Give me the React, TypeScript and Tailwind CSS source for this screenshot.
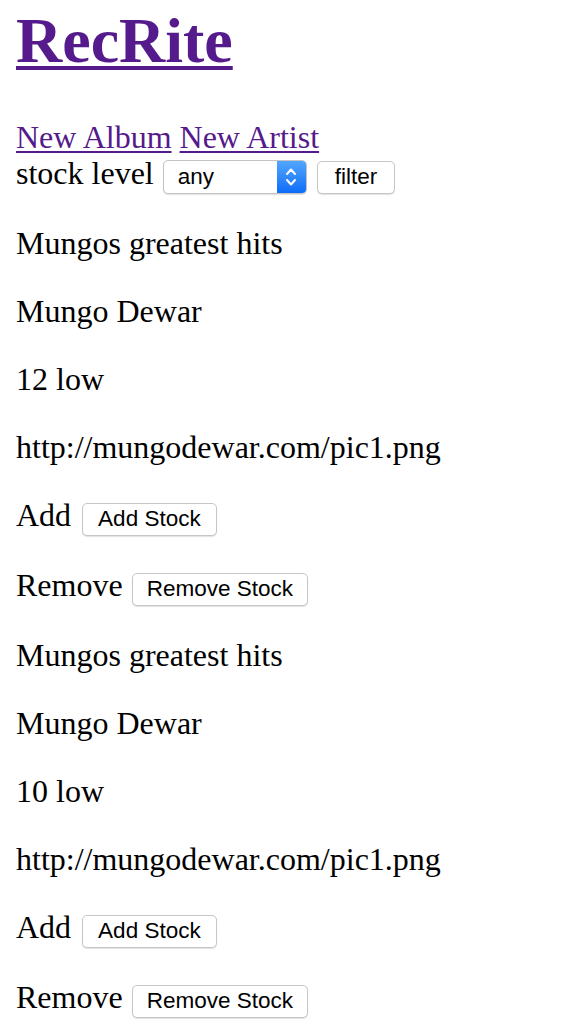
import React from "react";

function Btn({ children, px = "px-[15px]" }: { children: React.ReactNode; px?: string }) {
  return (
    <button
      type="button"
      className={`h-[33px] ${px} flex items-center bg-white border border-[#c6c6c6] rounded-[5px] shadow-[0_1px_1px_rgba(0,0,0,0.12)] font-['Liberation_Sans',Arial,sans-serif] text-[22.5px] leading-[26px] text-black`}
    >
      {children}
    </button>
  );
}

function Album({ count }: { count: number }) {
  return (
    <div>
      <p className="mt-8 h-[36px]">Mungos greatest hits</p>
      <p className="mt-8 h-[36px]">Mungo Dewar</p>
      <p className="mt-8 h-[36px]">{count} low</p>
      <p className="mt-8 h-[36px]">http://mungodewar.com/pic1.png</p>
      <div className="mt-8 h-[38px] flex items-baseline gap-[11px]">
        <span>Add</span>
        <Btn>Add Stock</Btn>
      </div>
      <div className="mt-8 h-[38px] flex items-baseline gap-[9px]">
        <span>Remove</span>
        <Btn px="px-[14px]">Remove Stock</Btn>
      </div>
    </div>
  );
}

export default function App() {
  return (
    <div className="min-h-screen bg-white pl-4 font-['Liberation_Serif','Times_New_Roman',serif] text-[32px] leading-[36px] text-black">
      <h1 className="pt-[5px] text-[64px] leading-[72px] font-bold">
        <a href="#" className="text-[#551a8b] underline decoration-4 underline-offset-4">
          RecRite
        </a>
      </h1>
      <div className="mt-[42px] h-[36px]">
        <a href="#" className="text-[#551a8b] underline decoration-2 underline-offset-[3px]">
          New Album
        </a>{" "}
        <a href="#" className="text-[#551a8b] underline decoration-2 underline-offset-[3px]">
          New Artist
        </a>
      </div>
      <div className="h-[38px] flex items-baseline">
        <span>stock level</span>
        <div className="ml-[9px] w-[144px] h-[34px] flex items-center bg-white border border-[#c3c3c3] rounded-[5px] shadow-[0_1px_1px_rgba(0,0,0,0.12)] overflow-hidden">
          <span className="flex-1 pl-[14px] font-['Liberation_Sans',Arial,sans-serif] text-[22.5px] leading-[26px]">
            any
          </span>
          <span className="w-[29px] h-full flex items-center justify-center bg-gradient-to-b from-[#52a6fd] to-[#0a6cf8]">
            <svg width="12" height="22" viewBox="0 0 12 22" fill="none" stroke="white" strokeWidth="2" strokeLinecap="round" strokeLinejoin="round">
              <path d="M2 8 L6 3.5 L10 8" />
              <path d="M2 14 L6 18.5 L10 14" />
            </svg>
          </span>
        </div>
        <div className="ml-[10px]">
          <Btn px="px-[17px]">filter</Btn>
        </div>
      </div>
      <Album count={12} />
      <Album count={10} />
    </div>
  );
}
